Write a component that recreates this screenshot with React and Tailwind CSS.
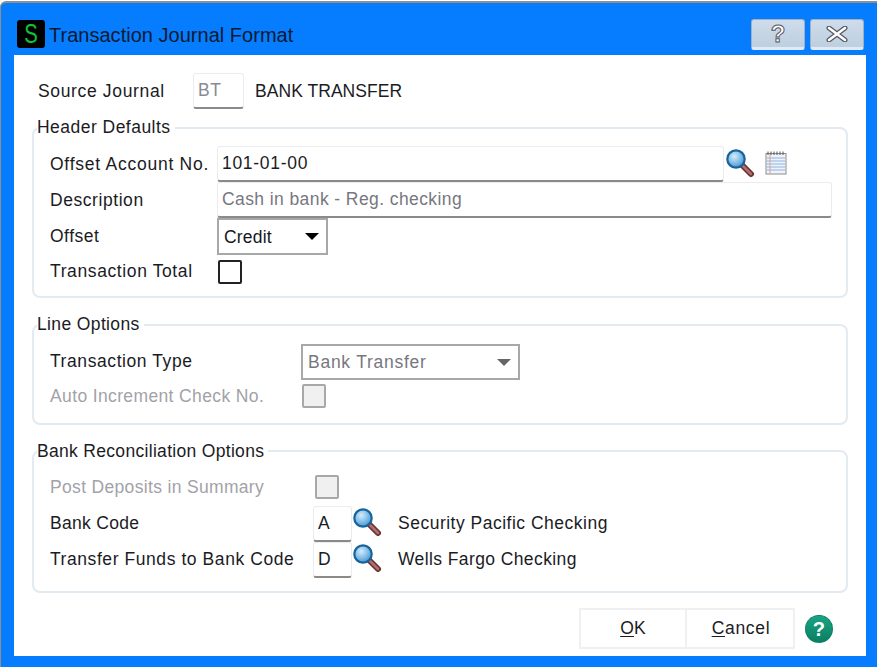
import React from "react";

const font = { fontFamily: '"Liberation Sans", Arial, sans-serif' };

function Lens({ className = "", id = "lg" }) {
  return (
    <svg width="30" height="30" viewBox="0 0 30 30" className={className}>
      <defs>
        <radialGradient id={id} cx="40%" cy="35%" r="70%">
          <stop offset="0%" stopColor="#d4ecfb" />
          <stop offset="60%" stopColor="#7ab8e6" />
          <stop offset="100%" stopColor="#4a8fca" />
        </radialGradient>
      </defs>
      <line x1="17" y1="17" x2="26" y2="26" stroke="#6b3232" strokeWidth="6" strokeLinecap="round" />
      <line x1="17" y1="17" x2="26" y2="26" stroke="#b07070" strokeWidth="2.5" strokeLinecap="round" />
      <circle cx="11" cy="11" r="8.7" fill={`url(#${id})`} stroke="#17639c" strokeWidth="2.2" />
    </svg>
  );
}

function Notepad() {
  return (
    <svg width="22" height="24" viewBox="0 0 22 24">
      <rect x="1" y="2.5" width="20" height="20.5" fill="#eef3fb" stroke="#8c8c8c" />
      {[7, 10, 13, 16, 19].map((y) => (
        <line key={y} x1="2" y1={y} x2="20" y2={y} stroke="#8fb2dd" />
      ))}
      <line x1="5" y1="3" x2="5" y2="23" stroke="#d9a58f" />
      {[3, 6, 9, 12, 15, 18].map((x) => (
        <line key={x} x1={x} y1="0.5" x2={x} y2="4" stroke="#555" />
      ))}
    </svg>
  );
}

function Field({ className = "", children }) {
  return (
    <div className={`flex items-center h-9 bg-white border border-[#ececec] border-b-2 border-b-[#8a8a8a] rounded-[3px] pl-1 ${className}`}>
      {children}
    </div>
  );
}

function Select({ className = "", text, disabled }) {
  return (
    <div className={`flex items-center justify-between bg-white border-2 border-[#a8a8a8] pl-[5px] ${className}`}>
      <span className={disabled ? "text-[#77777f] tracking-[0.74px]" : "text-[#16161c] tracking-[0.2px] mt-[2px]"}>{text}</span>
      <span className={`w-0 h-0 border-x-[7px] border-x-transparent border-t-[7px] mr-[7px] ${disabled ? "border-t-[#666666]" : "border-t-black"}`} />
    </div>
  );
}

function Check({ disabled, className = "" }) {
  return (
    <div
      className={`${
        disabled ? "bg-[#f0f0f0] border-2 border-[#a8a8a8] rounded-[2px]" : "bg-white border-2 border-[#222222] rounded-[2px]"
      } w-[24px] h-[24px] ${className}`}
    />
  );
}

function Row({ label, disabled, w = "w-[167px]", t = "", className = "", children }) {
  return (
    <div className={`flex items-center h-9 ${className}`}>
      <div className={`${w} shrink-0 ${t} ${disabled ? "text-[#a2a2a8]" : ""}`}>{label}</div>
      {children}
    </div>
  );
}

function Group({ title, t = "", legend = "-top-[14px]", className = "", children }) {
  return (
    <section className={`relative border-2 border-[#e2eaf2] rounded-[8px] ml-[18px] mr-[18px] pl-[16px] ${className}`}>
      <div className={`absolute left-[3px] bg-white pr-1 leading-[24px] ${legend} ${t}`}>{title}</div>
      {children}
    </section>
  );
}

export default function App() {
  return (
    <div className="w-[877px] h-[669px] bg-white overflow-hidden" style={font}>
      <div className="w-[877px] h-[666px] mt-[1px] bg-[#067dfe] border-t-2 border-l-[1px] border-[#8f8f8f] rounded-tl-[6px] pr-[11px] flex flex-col">
        <header className="h-[52px] shrink-0 flex items-center pl-[16px] pr-[2px] pt-[12px]">
          <div className="w-[28px] h-[28px] -mt-[2px] bg-black rounded-[3px] flex items-center justify-center text-[#0fc33c] text-[27px] leading-none">
            <span className="scale-x-75">S</span>
          </div>
          <div className="ml-[4px] text-[20px] tracking-[0.02px] text-[#0c1a30]">Transaction Journal Format</div>
          <div className="ml-auto flex gap-[5px] -mt-[1px]">
            <div className="w-[54px] h-[31px] flex items-center justify-center bg-gradient-to-b from-[#cfdcea] to-[#bdcfe0] border border-[#9fb0c2] border-b-[3px] border-b-[#e0eaf4] rounded-[3px] text-white text-[24px] font-bold leading-none [-webkit-text-stroke:1px_#55555f]">
              ?
            </div>
            <div className="w-[54px] h-[31px] flex items-center justify-center bg-gradient-to-b from-[#cfdcea] to-[#bdcfe0] border border-[#9fb0c2] border-b-[3px] border-b-[#e0eaf4] rounded-[3px]">
              <svg width="22" height="16" viewBox="0 0 22 16">
                <path d="M3 2 L19 14 M19 2 L3 14" stroke="#55555f" strokeWidth="5" strokeLinecap="round" />
                <path d="M3 2 L19 14 M19 2 L3 14" stroke="#ffffff" strokeWidth="2.6" strokeLinecap="round" />
              </svg>
            </div>
          </div>
        </header>
        <main className="flex-1 ml-[13px] mb-[11px] bg-white text-[17.5px] tracking-[0.5px] text-[#1b1b24] flex flex-col pt-[18px]">
          <div className="flex items-center h-9 pl-[24px]">
            <div className="w-[155px] tracking-[0.65px]">Source Journal</div>
            <Field className="w-[51px] text-[#8a8a92]">BT</Field>
            <div className="ml-[11px] tracking-[0.05px]">BANK TRANSFER</div>
          </div>

          <Group title="Header Defaults" t="tracking-[0.47px]" className="mt-[18px] h-[171px] pt-[17px]">
            <Row label="Offset Account No." t="tracking-[0.75px]">
              <Field className="w-[507px] tracking-[0.7px]">101-01-00</Field>
              <Lens id="lg1" className="ml-[1px] -mt-[3px]" />
              <div className="ml-[10px] -mt-[2px] flex"><Notepad /></div>
            </Row>
            <Row label="Description" t="tracking-[0.56px]">
              <Field className="w-[615px] text-[#77777f] tracking-[0.41px]">Cash in bank - Reg. checking</Field>
            </Row>
            <Row label="Offset">
              <Select className="w-[111px] h-[37px]" text="Credit" />
            </Row>
            <Row label="Transaction Total" t="tracking-[0.61px] -mt-[2px]">
              <Check className="ml-[1px]" />
            </Row>
          </Group>

          <Group title="Line Options" t="tracking-[0.37px]" className="mt-[26px] h-[101px] pt-[18px]">
            <Row label="Transaction Type" t="tracking-[0.58px] -mt-[2px]" w="w-[251px]">
              <Select className="w-[219px] h-[36px]" text="Bank Transfer" disabled />
            </Row>
            <Row label="Auto Increment Check No." t="tracking-[0.37px]" disabled w="w-[252px]" className="-mt-[2px]">
              <Check disabled />
            </Row>
          </Group>

          <Group title="Bank Reconciliation Options" t="tracking-[0.31px]" legend="-top-[13px]" className="mt-[25px] h-[143px] pt-[18px]">
            <Row label="Post Deposits in Summary" t="tracking-[0.33px] -mt-[2px]" disabled w="w-[265px]">
              <Check disabled className="w-[23px] h-[23px] -mt-[2px]" />
            </Row>
            <Row label="Bank Code" t="tracking-[0.3px] -mt-[2px]" w="w-[263px]">
              <Field className="w-[39px]">A</Field>
              <Lens id="lg2" className="-mt-[4px]" />
              <div className="ml-[16px] -mt-[2px] tracking-[0.5px]">Security Pacific Checking</div>
            </Row>
            <Row label="Transfer Funds to Bank Code" t="tracking-[0.57px] -mt-[2px]" w="w-[263px]">
              <Field className="w-[39px]">D</Field>
              <Lens id="lg3" className="-mt-[4px]" />
              <div className="ml-[16px] -mt-[2px] tracking-[0.4px]">Wells Fargo Checking</div>
            </Row>
          </Group>

          <footer className="mt-[15px] flex items-center ml-[565px]">
            <div className="w-[108px] h-[41px] flex items-center justify-center border-2 border-[#f0f0f0] tracking-[0.2px]">
              <span className="underline underline-offset-2">O</span>K
            </div>
            <div className="w-[108px] h-[41px] flex items-center justify-center border-2 border-l-0 border-[#f0f0f0] tracking-[0.7px] pl-[2px]">
              <span className="underline underline-offset-2">C</span>ancel
            </div>
            <div className="ml-[10px] w-[28px] h-[28px] rounded-full bg-gradient-to-b from-[#1aa383] to-[#0b7f62] border border-dashed border-[#0a7a5e] flex items-center justify-center text-white font-bold text-[20px] leading-none">?</div>
          </footer>
        </main>
      </div>
    </div>
  );
}
